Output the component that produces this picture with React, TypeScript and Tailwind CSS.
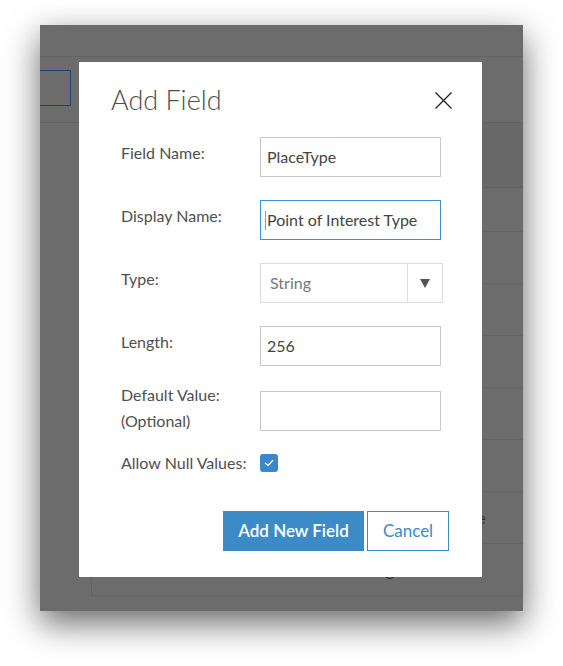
import React from "react";

function Label({ children }: { children: React.ReactNode }) {
  return <div className="w-[139px] shrink-0 pt-[4px] leading-[24px] text-[16px] text-[#4f4f4f]">{children}</div>;
}

function FakeInput({ value, focused }: { value?: string; focused?: boolean }) {
  return (
    <div
      className={
        focused
          ? "w-[181px] h-[40px] border border-[#3d8fd6] flex items-center pl-[4px] text-[16px] text-[#444444]"
          : "w-[181px] h-[40px] border border-[#c9c9c9] flex items-center pl-[6px] text-[16px] text-[#444444]"
      }
    >
      {focused ? <span className="w-px h-[19px] bg-[#9a9a9a] mr-[1px]" /> : null}
      <span className="whitespace-nowrap">{value}</span>
    </div>
  );
}

export default function App() {
  return (
    <div className="w-[563px] h-[666px] bg-white pt-[25px] pl-[40px] font-[family-name:Lato,'Noto_Sans',sans-serif]">
      <div className="relative w-[483px] h-[586px] bg-[#6c6c6c] shadow-[0_12px_32px_rgba(0,0,0,0.6)] overflow-hidden">
        {/* background page (dimmed by modal overlay) */}
        <div className="h-[32px] border-b border-[#636363]" />
        <div className="h-[66px] border-b border-[#636363] flex items-center">
          <div className="w-[31px] h-[36px] border border-l-0 border-[#1d4670] mt-[-3px]" />
        </div>
        <div className="flex">
          <div className="w-[51px] shrink-0" />
          <div className="flex-1 border-l border-[#636363] text-[16px] text-[#2e2e2e]">
            <div className="h-[65px] bg-[#686868] border-b border-[#626262]" />
            <div className="h-[44px] border-b border-[#646464]" />
            <div className="h-[52px] border-b border-[#646464]" />
            <div className="h-[52px] border-b border-[#646464]" />
            <div className="h-[52px] border-b border-[#646464]" />
            <div className="h-[52px] border-b border-[#646464]" />
            <div className="h-[52px] border-b border-[#646464]" />
            <div className="h-[52px] border-b border-[#646464] grid grid-cols-[261px_99px_1fr] items-center">
              <span />
              <span />
              <span className="leading-[24px]">Type</span>
            </div>
            <div className="h-[52px] border-b border-[#646464] grid grid-cols-[261px_99px_1fr] items-center">
              <span />
              <span className="leading-[24px]">String</span>
              <span />
            </div>
          </div>
        </div>

        {/* modal dialog */}
        <div className="absolute left-[39px] top-[37px] w-[403px] h-[515px] bg-white pt-[22px]">
          <div className="flex items-center justify-between pl-[32px] pr-[30px] h-[32px]">
            <h1 className="text-[27px] leading-[32px] font-light text-[#4d4d4d]">Add Field</h1>
            <svg width="17" height="17" viewBox="0 0 17 17" className="mt-[1px]">
              <path d="M0.5 0.5 L16.5 16.5 M16.5 0.5 L0.5 16.5" stroke="#1f1f1f" strokeWidth="1.2" fill="none" />
            </svg>
          </div>

          <div className="pl-[42px] mt-[21px]">
            <div className="flex items-start">
              <Label>Field Name:</Label>
              <FakeInput value="PlaceType" />
            </div>
            <div className="flex items-start mt-[23px]">
              <Label>Display Name:</Label>
              <FakeInput value="Point of Interest Type" focused />
            </div>
            <div className="flex items-start mt-[23px]">
              <Label>Type:</Label>
              <div className="w-[183px] h-[40px] border border-[#dcdcdc] flex text-[16px]">
                <div className="flex-1 flex items-center pl-[9px] text-[#777777]">String</div>
                <div className="w-[35px] border-l border-[#dcdcdc] flex items-center justify-center">
                  <svg width="10" height="9" viewBox="0 0 10 9">
                    <path d="M0 0 L10 0 L5 9 Z" fill="#555555" />
                  </svg>
                </div>
              </div>
            </div>
            <div className="flex items-start mt-[23px]">
              <Label>Length:</Label>
              <FakeInput value="256" />
            </div>
            <div className="flex items-start mt-[25px] h-[40px]">
              <div className="w-[139px] shrink-0 mt-[-9px] leading-[26px] text-[16px] text-[#4f4f4f]">
                <div>Default Value:</div>
                <div>(Optional)</div>
              </div>
              <FakeInput value="" />
            </div>
            <div className="flex items-center mt-[23px] h-[18px]">
              <div className="w-[139px] shrink-0 leading-[24px] text-[16px] text-[#4f4f4f] whitespace-nowrap">Allow Null Values:</div>
              <div className="w-[18px] h-[18px] rounded-[3px] bg-[#3b87c9] flex items-center justify-center">
                <svg width="12" height="12" viewBox="0 0 12 12">
                  <path d="M2.5 6.2 L5 8.6 L9.6 3.6" stroke="#ffffff" strokeWidth="1.4" fill="none" strokeLinecap="round" strokeLinejoin="round" />
                </svg>
              </div>
            </div>
          </div>

          <div className="flex justify-end gap-[3px] pr-[33px] mt-[39px]">
            <button className="w-[141px] h-[40px] bg-[#3c8bc7] text-white text-[17px] font-semibold">Add New Field</button>
            <button className="w-[82px] h-[40px] border border-[#3c8bc7] text-[#3c8bc7] text-[17px] bg-white">Cancel</button>
          </div>
        </div>
      </div>
    </div>
  );
}
